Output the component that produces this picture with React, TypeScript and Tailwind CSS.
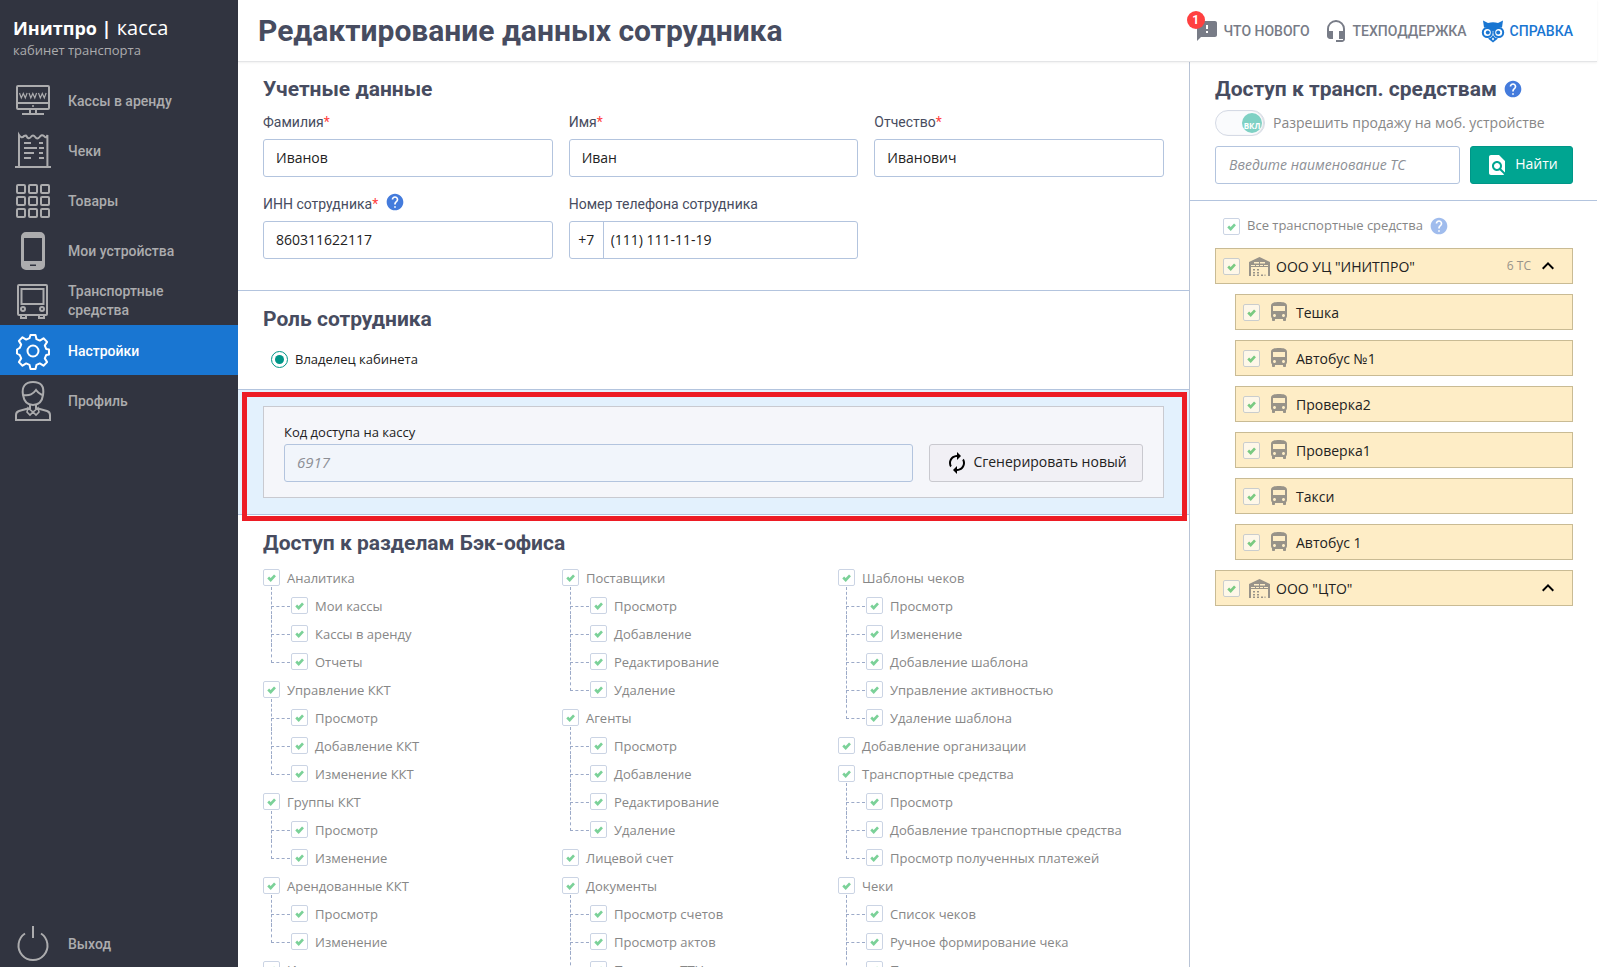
import React from 'react';
import {
  MdAutorenew,
  MdDirectionsBus,
  MdFeedback,
  MdFindInPage,
  MdHeadsetMic,
  MdHelp,
  MdKeyboardArrowUp,
} from 'react-icons/md';

type TreeNode = { title: string; items?: string[] };

const SECTIONS: TreeNode[][] = [
  [
    { title: 'Аналитика', items: ['Мои кассы', 'Кассы в аренду', 'Отчеты'] },
    { title: 'Управление ККТ', items: ['Просмотр', 'Добавление ККТ', 'Изменение ККТ'] },
    { title: 'Группы ККТ', items: ['Просмотр', 'Изменение'] },
    { title: 'Арендованные ККТ', items: ['Просмотр', 'Изменение'] },
    { title: 'Импорт' },
  ],
  [
    { title: 'Поставщики', items: ['Просмотр', 'Добавление', 'Редактирование', 'Удаление'] },
    { title: 'Агенты', items: ['Просмотр', 'Добавление', 'Редактирование', 'Удаление'] },
    { title: 'Лицевой счет' },
    { title: 'Документы', items: ['Просмотр счетов', 'Просмотр актов', 'Просмотр ТТН'] },
  ],
  [
    {
      title: 'Шаблоны чеков',
      items: ['Просмотр', 'Изменение', 'Добавление шаблона', 'Управление активностью', 'Удаление шаблона'],
    },
    { title: 'Добавление организации' },
    {
      title: 'Транспортные средства',
      items: ['Просмотр', 'Добавление транспортные средства', 'Просмотр полученных платежей'],
    },
    { title: 'Чеки', items: ['Список чеков', 'Ручное формирование чека', 'Просмотр чека'] },
  ],
];

const COMPANIES = [
  {
    name: 'ООО УЦ "ИНИТПРО"',
    count: '6 ТС',
    vehicles: ['Тешка', 'Автобус №1', 'Проверка2', 'Проверка1', 'Такси', 'Автобус 1'],
  },
  { name: 'ООО "ЦТО"', count: '', vehicles: [] },
];

function NavSvg({ children }: { children: React.ReactNode }) {
  return (
    <svg
      viewBox="0 0 36 40"
      className="h-10 w-9 shrink-0"
      fill="none"
      stroke="currentColor"
      strokeWidth="2"
      aria-hidden="true"
    >
      {children}
    </svg>
  );
}

const MonitorIcon = () => (
  <NavSvg>
    <rect x="2" y="5" width="32" height="23" rx="1" />
    <path d="M2 22h32M15 28v4M21 28v4M7 33h22" />
    <path
      d="M4.500 12l1.800 5 2-4.500 2 4.500 1.800-5M14 12l1.800 5 2-4.500 2 4.500 1.800-5M23.500 12l1.800 5 2-4.500 2 4.500 1.800-5"
      strokeWidth="1.200"
    />
    <circle cx="18" cy="25" r="1" fill="currentColor" stroke="none" />
  </NavSvg>
);

const ReceiptIcon = () => (
  <NavSvg>
    <path d="M4 36V4q2.500 4 5 1q2.200 -1 2.400 0q2 4 4.400 1q2.200 -3 4.400 0q2 3 4.400 0q2 -3 4.400 -1q2 3 3.400 -1V36M0 36h37" />
    <path d="M9 12h7M9 17h13M9 22h10M9 27h7M24 12h4M24 17h5M24 22h4M24 27h5" strokeWidth="1.800" />
  </NavSvg>
);

const GridIcon = () => (
  <NavSvg>
    {[4, 16, 28].map((y) =>
      [2, 14, 26].map((x) => <rect key={`${x}-${y}`} x={x} y={y} width="8" height="8" rx="1" />)
    )}
  </NavSvg>
);

const PhoneIcon = () => (
  <NavSvg>
    <path
      fill="currentColor"
      stroke="none"
      fillRule="evenodd"
      d="M11 1h14a5 5 0 0 1 5 5v28a5 5 0 0 1-5 5H11a5 5 0 0 1-5-5V6a5 5 0 0 1 5-5zM9 7v23h18V7zM15 33.500v1.500h6v-1.500z"
    />
  </NavSvg>
);

const BusIcon = () => (
  <NavSvg>
    <rect x="3" y="4" width="29" height="30" rx="1" />
    <rect x="6.500" y="8" width="22" height="15" />
    <circle cx="8" cy="28" r="2" />
    <circle cx="27" cy="28" r="2" />
    <path d="M6 34v3h5v-3M24 34v3h5v-3" />
  </NavSvg>
);

const GearIcon = () => (
  <NavSvg>
    <circle cx="18" cy="20" r="5.500" />
    <path
      strokeLinejoin="round"
      d="M15.500 4h5l1 4.200 3.300 1.400 3.700-2.300 3.600 3.600-2.300 3.700 1.400 3.300 2.800.600v5l-2.800.6-1.400 3.300 2.300 3.700-3.600 3.600-3.700-2.300-3.300 1.400-1 4.200h-5l-1-4.200-3.300-1.400-3.700 2.300-3.600-3.600 2.300-3.700-1.400-3.300L2 22.500v-4l2.800-1.600 1.400-3.300-2.300-3.700 3.600-3.600 3.700 2.300 3.300-1.400z"
    />
  </NavSvg>
);

const ProfileIcon = () => (
  <NavSvg>
    <path d="M8 14C6.500 6 10 1 18 1s11.500 4 10 13c-.8 6-4 10-10 10S9 20 8 14z" />
    <path d="M8 14c7 1 10-1 13-5 2 3 4 4 6 5M15 24v4M21 24v4" />
    <path d="M1 40v-6q0-3 3-4l9-2.500M35 40v-6q0-3-3-4l-9-2.500M0 39h36" />
    <path d="M13 27l-1 4 3 3 3-3 3 3 3-3-1-4-5 4z" strokeWidth="1.600" />
  </NavSvg>
);

const PowerIcon = () => (
  <NavSvg>
    <path d="M10 9.500a14.500 14.500 0 1 0 16 0M18 2v12" />
  </NavSvg>
);

const OwlIcon = () => (
  <svg viewBox="0 0 24 24" className="h-6 w-6 shrink-0" aria-hidden="true">
    <path fill="#1976d2" d="M2 1.500l5 2.500q5-1.500 10 0l5-2.500-1 7q-5 0-9 4-4-4-9-4z" />
    <g fill="#fff" stroke="#1976d2" strokeWidth="2">
      <circle cx="6.300" cy="13.500" r="4.500" />
      <circle cx="17.700" cy="13.500" r="4.500" />
    </g>
    <g fill="#1976d2">
      <circle cx="6.800" cy="13.500" r="2" />
      <circle cx="17.200" cy="13.500" r="2" />
      <path d="M12 16l2 2.500 3 1-5 4-5-4 3-1z" />
    </g>
    <path d="M12 18.500l1.200 1.500-1.200 1.500-1.200-1.500z" fill="#fff" />
  </svg>
);

const WarehouseIcon = () => (
  <svg viewBox="0 0 21 19" className="h-[19px] w-[21px] shrink-0" fill="#989389" aria-hidden="true">
    <path d="M10.500 0L21 5v14h-2V10H2v9H0V5z" />
    <path d="M5 5h5v1.500H5zM11 5h5v1.500h-5zM2 8h4v1H2zM7 8h3v1H7zM11 8h3v1h-3zM15 8h4v1h-4z" fill="#feedc6" />
    <path d="M4 12h2v1.500H4zM8 12h2v1.500H8zM4 15h2v1.500H4zM8 15h2v1.500H8zM4 17.500h2V19H4zM8 17.500h2V19H8zM12 17.500h2V19h-2zM15.500 17.500h1V19h-1z" />
  </svg>
);

const NAV = [
  { label: 'Кассы в аренду', icon: <MonitorIcon /> },
  { label: 'Чеки', icon: <ReceiptIcon /> },
  { label: 'Товары', icon: <GridIcon /> },
  { label: 'Мои устройства', icon: <PhoneIcon /> },
  { label: 'Транспортные средства', icon: <BusIcon /> },
  { label: 'Настройки', icon: <GearIcon />, active: true },
  { label: 'Профиль', icon: <ProfileIcon /> },
];

function Sidebar() {
  return (
    <aside className="flex w-[238px] shrink-0 flex-col bg-[#313440] font-['Roboto',sans-serif] text-[#acacae]">
      <div className="h-[75px] px-[13px] pt-4 font-['Open_Sans',sans-serif]">
        <div className="text-[20px] leading-6 text-white">
          <b className="text-[18px]">Инитпро |</b> касса
        </div>
        <div className="text-[13px] leading-5">кабинет транспорта</div>
      </div>
      <nav className="flex grow flex-col">
        {NAV.map((item) => (
          <a
            key={item.label}
            href="#"
            className={
              item.active
                ? 'flex h-[50px] items-center gap-[17px] bg-[#1976d2] pt-0.5 pr-12 pl-[15px] text-[14px] leading-[19px] font-medium text-white'
                : 'flex h-[50px] items-center gap-[17px] pt-0.5 pr-12 pl-[15px] text-[14px] leading-[19px] font-medium'
            }
          >
            {item.icon}
            {item.label}
          </a>
        ))}
      </nav>
      <a href="#" className="flex h-12 shrink-0 items-center gap-[17px] pt-0.5 pl-[15px] text-[14px] font-medium">
        <PowerIcon />
        Выход
      </a>
    </aside>
  );
}

function Header() {
  return (
    <header className="z-10 flex h-[62px] shrink-0 items-center border-b border-[#e4e5e7] pt-px pr-6 pl-5 font-['Roboto',sans-serif] shadow-[0_1px_2px_rgba(0,0,0,0.06)]">
      <h1 className="grow text-[30px] leading-9 font-bold text-[#474c60]">Редактирование данных сотрудника</h1>
      <div className="flex items-center gap-[14px] text-[14px] font-medium text-[#787c87] uppercase">
        <a href="#" className="relative flex items-center gap-[5px]">
          <MdFeedback className="h-6 w-6" />
          Что нового
          <span className="absolute -top-2 -left-2 grid h-[18px] w-[18px] place-items-center rounded-full bg-[#ff4040] text-[12px] font-bold text-white">
            1
          </span>
        </a>
        <a href="#" className="flex items-center gap-[5px]">
          <MdHeadsetMic className="h-6 w-6" />
          Техподдержка
        </a>
        <a href="#" className="flex items-center gap-[5px] text-[#1976d2]">
          <OwlIcon />
          Справка
        </a>
      </div>
    </header>
  );
}

function Heading({ children }: { children: React.ReactNode }) {
  return <h2 className="font-['Roboto',sans-serif] text-[21px] leading-6 font-bold text-[#474c60]">{children}</h2>;
}

function Check({ children, className = '' }: { children?: React.ReactNode; className?: string }) {
  return (
    <label className={`flex items-center ${className}`}>
      <span className="grid shrink-0 opacity-60">
        <input
          type="checkbox"
          defaultChecked
          disabled
          className="col-start-1 row-start-1 h-[17px] w-[17px] appearance-none rounded-[2px] border border-[#a9b9d3] bg-white"
        />
        <svg viewBox="0 0 17 17" className="col-start-1 row-start-1 h-[17px] w-[17px]" aria-hidden="true">
          <path d="M5.200 8.500l2.500 2.500 4.300-4.700" fill="none" stroke="#24b455" strokeWidth="2.600" />
        </svg>
      </span>
      {children}
    </label>
  );
}

type FieldProps = { id: string; label: string; value: string; required?: boolean; help?: boolean };

function Field({ id, label, value, required, help }: FieldProps) {
  return (
    <div>
      <div className="flex h-[34px] items-center gap-[7px]">
        <label htmlFor={id} className="font-['Roboto',sans-serif] text-[14px] text-[#474c60]">
          {label}
          {required && <span className="text-[#ff4040]">*</span>}
        </label>
        {help && <MdHelp className="mt-[5px] h-5 w-5 self-start text-[#447bdc]" />}
      </div>
      <input
        id={id}
        defaultValue={value}
        className="h-[38px] w-full rounded-[3px] border border-[#b3c4de] px-3 pb-0.5 text-[14px] text-[#222]"
      />
    </div>
  );
}

function AccessTree() {
  return (
    <div className="grid grid-cols-[299px_276px_1fr] text-[13px] leading-5 text-[#878787]">
      {SECTIONS.map((column, i) => (
        <ul key={i}>
          {column.map((node) => (
            <li key={node.title}>
              <Check className="h-7 gap-[7px] pt-px">
                <span className="pt-px">{node.title}</span>
              </Check>
              {node.items && (
                <ul className="pl-2">
                  {node.items.map((item, k) => (
                    <li key={item} className="flex h-7">
                      {/* dashed connector to the parent */}
                      <span className="relative w-5 shrink-0">
                        <span
                          className={
                            k === node.items!.length - 1
                              ? 'absolute -top-1 left-0 h-5 border-l border-dashed border-[#9caac8]'
                              : 'absolute -top-1 left-0 h-8 border-l border-dashed border-[#9caac8]'
                          }
                        />
                        <span className="absolute top-[15px] left-0 w-[19px] border-t border-dashed border-[#9caac8]" />
                      </span>
                      <Check className="gap-[7px] pt-px">
                        <span className="pt-px">{item}</span>
                      </Check>
                    </li>
                  ))}
                </ul>
              )}
            </li>
          ))}
        </ul>
      ))}
    </div>
  );
}

function EmployeeForm() {
  return (
    <main className="min-w-0 grow overflow-y-auto border-r border-[#b9c4d6] [scrollbar-width:none]">
      <section className="h-[229px] border-b border-[#b3c4de] px-[25px] pt-[15px]">
        <Heading>Учетные данные</Heading>
        <div className="mt-1 grid grid-cols-3 gap-x-4 gap-y-[10px]">
          <Field id="surname" label="Фамилия" value="Иванов" required />
          <Field id="name" label="Имя" value="Иван" required />
          <Field id="patronymic" label="Отчество" value="Иванович" required />
          <Field id="inn" label="ИНН сотрудника" value="860311622117" required help />
          <div>
            <label
              htmlFor="phone"
              className="flex h-[34px] items-center font-['Roboto',sans-serif] text-[14px] text-[#474c60]"
            >
              Номер телефона сотрудника
            </label>
            <div className="flex h-[38px] rounded-[3px] border border-[#b3c4de] text-[14px] text-[#222]">
              <span className="flex w-[34px] items-center justify-center border-r border-[#b3c4de] pb-0.5">+7</span>
              <input id="phone" defaultValue="(111) 111-11-19" className="min-w-0 grow px-[7px] pb-0.5" />
            </div>
          </div>
        </div>
      </section>

      <section className="h-[99px] border-b border-[#b3c4de] px-[25px] pt-4">
        <Heading>Роль сотрудника</Heading>
        <label className="mt-4 ml-2 flex h-6 items-center gap-[7px] text-[13px] text-[#222]">
          <input
            type="radio"
            name="role"
            defaultChecked
            className="h-[17px] w-[17px] appearance-none rounded-full border border-[#009688] bg-[#009688] bg-clip-content p-[3px]"
          />
          <span className="pt-0.5">Владелец кабинета</span>
        </label>
      </section>

      <section className="relative border-b border-[#b3c4de] bg-[#e3f1fd] px-[25px] py-4">
        <div className="flex items-end gap-4 border border-[#c9cad0] bg-[#f5f6fa] px-5 pt-[15px] pb-[15px]">
          <div className="grow">
            <label htmlFor="code" className="block pb-0.5 text-[13px] leading-5 text-[#222]">
              Код доступа на кассу
            </label>
            <input
              id="code"
              disabled
              placeholder="6917"
              className="h-[38px] w-full rounded-[3px] border border-[#b3c4de] bg-[#f1f5fb] px-3 pb-0.5 text-[15px] italic placeholder:text-[#8d9096]"
            />
          </div>
          <button
            type="button"
            className="flex h-[38px] w-[214px] items-center justify-center gap-1 rounded-[3px] border border-[#c9c9cf] bg-[#f1f0f5] text-[14px] text-[#222]"
          >
            <MdAutorenew className="h-6 w-6 text-black" />
            <span className="pb-[3px]">Сгенерировать новый</span>
          </button>
        </div>
        <div className="pointer-events-none absolute top-0.5 right-0.5 -bottom-[7px] left-1 border-[5px] border-[#ed1c24]" />
      </section>

      <section className="px-[25px] pt-4">
        <Heading>Доступ к разделам Бэк-офиса</Heading>
        <div className="mt-2">
          <AccessTree />
        </div>
      </section>
    </main>
  );
}

function VehiclesPanel() {
  return (
    <aside className="w-[407px] shrink-0">
      <div className="h-[139px] border-b border-[#b3c4de] pt-[15px] pr-6 pl-[25px]">
        <div className="flex items-center gap-1.5">
          <Heading>Доступ к трансп. средствам</Heading>
          <MdHelp className="h-5 w-5 text-[#447bdc]" />
        </div>
        <label className="mt-[9px] flex items-center gap-2 text-[14px] leading-[26px] text-[#878787]">
          <input type="checkbox" role="switch" defaultChecked disabled className="peer sr-only" />
          <span className="flex h-[26px] w-[50px] items-center justify-end rounded-full border border-[#d5dae5] bg-[#fafbfd] pr-0.5 shadow-[inset_-1px_0_1px_rgba(0,0,0,0.12)]">
            <span className="grid h-5 w-5 place-items-center rounded-full bg-[#7fd1c4] text-[8px] font-bold text-white">
              ВКЛ
            </span>
          </span>
          Разрешить продажу на моб. устройстве
        </label>
        <div className="mt-[10px] flex gap-[10px]">
          <input
            aria-label="Наименование ТС"
            placeholder="Введите наименование ТС"
            className="h-[38px] min-w-0 grow rounded-[3px] border border-[#b3c4de] px-[13px] pb-0.5 text-[14px] italic placeholder:text-[#8d9096]"
          />
          <button
            type="button"
            className="flex h-[38px] w-[103px] items-center justify-center gap-1.5 rounded-[3px] border border-[#009688] bg-[#00a591] text-[14px] text-white"
          >
            <MdFindInPage className="h-6 w-6" />
            <span className="pb-[3px]">Найти</span>
          </button>
        </div>
      </div>

      <div className="flex flex-col gap-[10px] pt-[13px] pr-6 pl-[25px]">
        <div className="flex h-6 items-center gap-1.5 pl-2 text-[13px] text-[#878787]">
          <Check className="gap-[7px]">Все транспортные средства</Check>
          <MdHelp className="h-5 w-5 text-[#447bdc] opacity-50" />
        </div>
        {COMPANIES.map((company) => (
          <React.Fragment key={company.name}>
            <div className="flex h-9 items-center border border-[#c9bb94] bg-[#feedc6] px-[7px] text-[14px] text-[#222]">
              <Check className="grow gap-[9px]">
                <span className="flex items-center gap-1.5">
                  <WarehouseIcon />
                  {company.name}
                </span>
              </Check>
              <span className="text-[12px] text-[#989389]">{company.count}</span>
              <button type="button" aria-label="Свернуть" className="mr-[5px] ml-[5px] text-black">
                <MdKeyboardArrowUp className="h-6 w-6" />
              </button>
            </div>
            {company.vehicles.map((name) => (
              <div
                key={name}
                className="ml-5 flex h-9 items-center border border-[#c9bb94] bg-[#feedc6] px-[7px] text-[14px] text-[#222]"
              >
                <Check className="grow gap-[7px]">
                  <span className="flex items-center gap-[5px]">
                    <MdDirectionsBus className="h-6 w-6 text-[#989389]" />
                    {name}
                  </span>
                </Check>
              </div>
            ))}
          </React.Fragment>
        ))}
      </div>
    </aside>
  );
}

export default function App() {
  return (
    <div className="flex h-screen overflow-hidden bg-white pr-[11px] font-['Open_Sans',sans-serif]">
      <Sidebar />
      <div className="flex min-w-0 grow flex-col">
        <Header />
        <div className="flex min-h-0 grow">
          <EmployeeForm />
          <VehiclesPanel />
        </div>
      </div>
    </div>
  );
}
